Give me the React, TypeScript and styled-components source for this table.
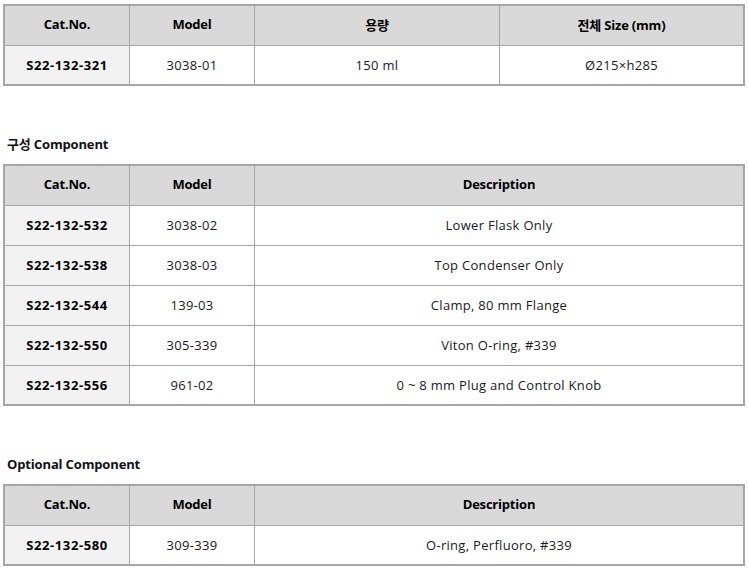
import React from "react";
import styled, { createGlobalStyle } from "styled-components";

const GlobalStyle = createGlobalStyle`
  html, body {
    margin: 0;
    padding: 0;
    background: #ffffff;
  }
  body {
    font-family: "Open Sans", "Noto Sans CJK KR", sans-serif;
    font-size: 13px;
    color: #111;
  }
`;

const Page = styled.div`
  display: flex;
  flex-direction: column;
  padding: 4px 0 0 3px;
  width: 742px;
`;

const Section = styled.section<{ $first?: boolean }>`
  display: flex;
  flex-direction: column;
  margin-top: ${(p) => (p.$first ? "0" : "48px")};
`;

const Heading = styled.h3`
  margin: 0 0 10px 4px;
  height: 20px;
  line-height: 20px;
  font-size: 13px;
  font-weight: 700;
  letter-spacing: -0.15px;
  color: #111;
`;

const Grid = styled.div<{ $cols: string }>`
  display: grid;
  grid-template-columns: ${(p) => p.$cols};
  border: 2px solid #a6a6a6;
  width: 742px;
  box-sizing: border-box;
`;

const Cell = styled.div<{ $head?: boolean; $key?: boolean; $last?: boolean; $lastCol?: boolean }>`
  box-sizing: border-box;
  height: ${(p) => (p.$last ? "38px" : "40px")};
  padding-bottom: ${(p) => (p.$head ? "3px" : p.$last ? "0" : "2px")};
  display: flex;
  align-items: center;
  justify-content: center;
  border-right: ${(p) => (p.$lastCol ? "none" : "1px solid #a6a6a6")};
  border-bottom: ${(p) => (p.$last ? "none" : "1px solid #a6a6a6")};
  background: ${(p) => (p.$head ? "#d9d9d9" : p.$key ? "#f2f2f2" : "#ffffff")};
  font-weight: ${(p) => (p.$head || p.$key ? 700 : 400)};
  letter-spacing: ${(p) => (p.$head ? "-0.2px" : p.$key ? "0.6px" : "0.3px")};
  color: ${(p) => (p.$head || p.$key ? "#000" : "#1a1a1a")};
  font-size: 13px;
  white-space: nowrap;
`;

type TableProps = {
  cols: string;
  headers: string[];
  rows: string[][];
};

const DataTable: React.FC<TableProps> = ({ cols, headers, rows }) => (
  <Grid $cols={cols}>
    {headers.map((h, i) => (
      <Cell key={`h${i}`} $head $lastCol={i === headers.length - 1}>
        {h}
      </Cell>
    ))}
    {rows.map((r, ri) =>
      r.map((c, ci) => (
        <Cell
          key={`${ri}-${ci}`}
          $key={ci === 0}
          $last={ri === rows.length - 1}
          $lastCol={ci === r.length - 1}
        >
          {c}
        </Cell>
      ))
    )}
  </Grid>
);

const componentRows = [
  ["S22-132-532", "3038-02", "Lower Flask Only"],
  ["S22-132-538", "3038-03", "Top Condenser Only"],
  ["S22-132-544", "139-03", "Clamp, 80 mm Flange"],
  ["S22-132-550", "305-339", "Viton O-ring, #339"],
  ["S22-132-556", "961-02", "0 ~ 8 mm Plug and Control Knob"],
];

export default function App() {
  return (
    <>
      <GlobalStyle />
      <Page>
        <Section $first>
          <DataTable
            cols="125px 125px 245px 1fr"
            headers={["Cat.No.", "Model", "용량", "전체 Size (mm)"]}
            rows={[["S22-132-321", "3038-01", "150 ml", "Ø215×h285"]]}
          />
        </Section>
        <Section>
          <Heading>구성 Component</Heading>
          <DataTable
            cols="125px 125px 1fr"
            headers={["Cat.No.", "Model", "Description"]}
            rows={componentRows}
          />
        </Section>
        <Section>
          <Heading>Optional Component</Heading>
          <DataTable
            cols="125px 125px 1fr"
            headers={["Cat.No.", "Model", "Description"]}
            rows={[["S22-132-580", "309-339", "O-ring, Perfluoro, #339"]]}
          />
        </Section>
      </Page>
    </>
  );
}
